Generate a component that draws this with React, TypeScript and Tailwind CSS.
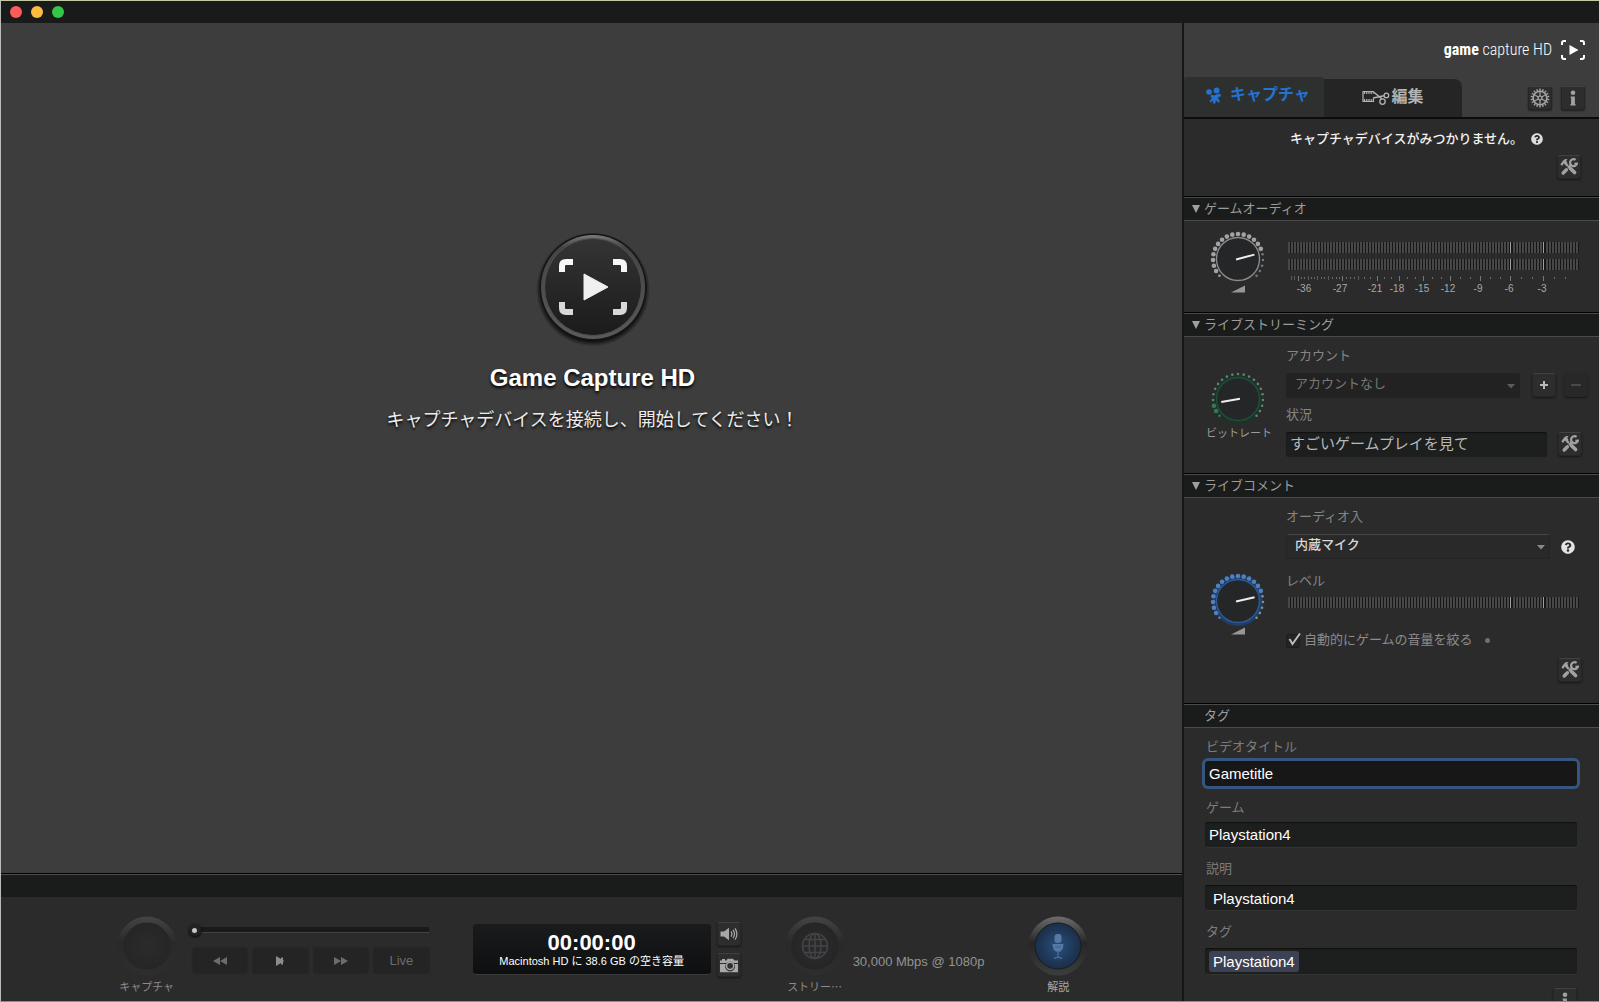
import { useState } from "react";
import type { ReactNode } from "react";
import { clsx } from "clsx";
import { FaQuestionCircle } from "react-icons/fa";

function ToolsIcon() {
	return (
		<svg viewBox="0 0 18 18" className="h-[18px] w-[18px]" fill="none">
			<path
				d="M0.400 6.200 3.200 2.400Q5 .6 7.600 1.200L6.200 2.800 7.400 4.800 5.400 6.800 3.800 5.600 2 8Z"
				fill="#a2a2a2"
			/>
			<path d="M5.600 5.600 7.800 7.800" stroke="#a2a2a2" strokeWidth="2.400" />
			<path
				d="m10.400 10.400 4.200 4.200"
				stroke="#a2a2a2"
				strokeWidth="3.600"
				strokeLinecap="round"
			/>
			<path
				d="m3.200 15 3.200-3.200"
				stroke="#a2a2a2"
				strokeWidth="3.400"
				strokeLinecap="round"
			/>
			<path d="m8 9.800 3.200-3.200" stroke="#a2a2a2" strokeWidth="2.400" />
			<path
				d="M15.600 1.800A3.500 3.500 0 1 0 17 5.600L14.400 5.800"
				stroke="#a2a2a2"
				strokeWidth="2.200"
			/>
		</svg>
	);
}

function GearIcon() {
	const teeth = Array.from({ length: 18 }, (_, i) => i * 20);
	return (
		<svg viewBox="-10 -10 20 20" className="h-5 w-5" stroke="#a2a2a2" fill="none">
			{teeth.map((deg) => (
				<path key={deg} d="M0-7V-9.4" strokeWidth="1.4" transform={`rotate(${deg})`} />
			))}
			<circle r="6.8" strokeWidth="1.6" />
			<circle r="1.9" strokeWidth="1.4" />
			{[0, 60, 120, 180, 240, 300].map((deg) => (
				<path key={deg} d="M0-2V-6.5" strokeWidth="1.3" transform={`rotate(${deg})`} />
			))}
		</svg>
	);
}

function InfoIcon() {
	return (
		<svg viewBox="0 0 8 16" className="h-4 w-2" fill="#a2a2a2">
			<circle cx="4" cy="2.800" r="2.300" />
			<path d="M1.600 6.400h4.300v7.800h.8v1.300H1.300v-1.300h.8V7.700h-.5z" />
		</svg>
	);
}

function PlayersIcon() {
	return (
		<svg viewBox="0 0 16 17" className="h-[17px] w-4" fill="#2373cf">
			<circle cx="3" cy="5" r="2.800" />
			<circle cx="10.600" cy="3.400" r="2.900" />
			<path d="M5.400 7.600 8 8.400 13 6.600 15.200 8 14.400 9.800 12.400 9.800 12.200 11.400 14 14.400 12.400 15.800 10 13.200 9.200 16.600 7 16.600 6.800 13.200 4.800 15.400 3.400 14.200 6 11 4.400 9.400Z" />
		</svg>
	);
}

function EditIcon() {
	return (
		<svg viewBox="0 0 28 17" className="h-[17px] w-7" fill="none" stroke="#b4b4b4">
			<path d="M11.500 2.500H1V12.500H11.500V9.500" strokeWidth="1.2" />
			<path d="M2 4H11.500M2 11H11.500" strokeWidth="1.8" strokeDasharray="1.2 1" />
			<path d="M11 2.500 20 10M11 9 22 6.800" strokeWidth="1.5" />
			<circle cx="24.400" cy="6.400" r="2.300" strokeWidth="1.3" />
			<circle cx="20.500" cy="12.600" r="2.700" strokeWidth="1.3" />
		</svg>
	);
}

function SpeakerIcon() {
	return (
		<svg viewBox="0 0 18 14" className="h-3.5 w-[18px]" fill="none" stroke="#a8a8a8">
			<path d="M.5 4.5H4L9 .8V13.2L4 9.5H.5Z" fill="#a8a8a8" stroke="none" />
			<path d="M11 4.4Q12.8 7 11 9.6M13 2.8Q16 7 13 11.2M15 1.4Q18.8 7 15 12.6" strokeWidth="1.2" />
		</svg>
	);
}

function CameraIcon() {
	return (
		<svg viewBox="0 0 20 15" className="h-[15px] w-5" fill="#a8a8a8">
			<path d="M1 5V2.5H3V1H6V2.5H7.5L8.5.8H14L15.4 2.5H19V5H14.6A4.8 4.8 0 0 0 7.6 5Z" />
			<path d="M1 6H7A4.8 4.8 0 1 0 15.2 6H19V14.2H1Z" />
			<circle cx="11.1" cy="7.8" r="3.6" fill="none" stroke="#a8a8a8" strokeWidth="1.5" />
		</svg>
	);
}

function IconButton({
	label,
	children,
	disabled,
}: {
	label: string;
	children: ReactNode;
	disabled?: boolean;
}) {
	return (
		<button
			type="button"
			aria-label={label}
			disabled={disabled}
			className={clsx(
				"flex h-6 w-6 shrink-0 items-center justify-center rounded-[3px] shadow-[0_1px_2px_#00000080]",
				disabled
					? "bg-[#282828]"
					: "border border-[#262626] border-t-[#424242] bg-[#2d2d2d]",
			)}
		>
			{children}
		</button>
	);
}

const tones = {
	gray: { ring: "#8a8a8a", lit: "#a3a3a3", dim: "#757575", glow: "none" },
	green: { ring: "#1e5038", lit: "#2f7b55", dim: "#6d7d74", glow: "#1c3428" },
	blue: { ring: "#2a5c9c", lit: "#5180c0", dim: "#8d8f85", glow: "#1f3f68" },
};

function Knob({
	tone,
	label,
	lit,
	angle,
	wedge,
}: {
	tone: keyof typeof tones;
	label: string;
	lit: number;
	angle: number;
	wedge?: boolean;
}) {
	const { ring, lit: litColor, dim, glow } = tones[tone];
	const dots = Array.from({ length: 21 }, (_, i) => {
		const a = ((-132 + i * 13.2) * Math.PI) / 180;
		return { x: 25 * Math.sin(a), y: -25 * Math.cos(a), on: i < lit };
	});
	return (
		<div className="relative w-14">
			<svg
				viewBox={wedge ? "-28 -28 56 62" : "-28 -28 56 56"}
				className={wedge ? "block h-[62px] w-14" : "block h-14 w-14"}
			>
				<circle r="23.5" fill="none" stroke={glow} strokeWidth="3" />
				{dots.map((dot, i) => (
					<circle
						key={i}
						cx={dot.x}
						cy={dot.y}
						r={dot.on && i > 0 ? 2.3 : 1.3}
						fill={dot.on ? litColor : dim}
					/>
				))}
				<circle r="21.5" fill="#252627" stroke={ring} strokeWidth="1.4" />
				<path
					d="M-2 0H17"
					stroke="#eeeeee"
					strokeWidth="2"
					transform={`rotate(${angle})`}
				/>
				{wedge && <path d="M-7 33.5 7 26.500V33.5Z" fill="#969696" />}
			</svg>
			<input
				type="range"
				aria-label={label}
				className="absolute inset-0 h-full w-full opacity-0"
			/>
		</div>
	);
}

function Meter({ label }: { label: string }) {
	const bars = Array.from({ length: 97 }, (_, i) => i);
	return (
		<svg role="img" aria-label={label} viewBox="0 0 291 11" className="block h-[11px] w-[291px]">
			<rect width="291" height="11" fill="#161616" />
			{bars.map((i) => (
				<rect
					key={i}
					x={i * 3}
					width={i === 74 || i === 85 ? 1 : 2}
					height="11"
					fill={i === 74 || i === 85 ? "#a0a0a0" : "#484848"}
				/>
			))}
		</svg>
	);
}

const scale = [
	{ db: -36, tick: 10, x: 16 },
	{ db: -27, tick: 54, x: 52 },
	{ db: -21, tick: 89, x: 87 },
	{ db: -18, tick: 111, x: 109 },
	{ db: -15, tick: 135, x: 134 },
	{ db: -12, tick: 162, x: 160 },
	{ db: -9, tick: 192, x: 190 },
	{ db: -6, tick: 222, x: 221 },
	{ db: -3, tick: 255, x: 254 },
];
const mediumTicks = [3, 6, 20, 29, 40, 70];
const smallTicks = [
	13, 16, 23, 26, 33, 36, 44, 48, 51, 58, 62, 66, 76, 82, 96, 103, 119, 127, 144,
	153, 172, 182, 202, 212, 233, 244, 266, 277,
];

function MeterScale() {
	return (
		<svg viewBox="0 0 291 20" className="block h-5 w-[291px]">
			{smallTicks.map((x) => (
				<rect key={x} x={x} y="1" width="1" height="2" fill="#6a6a6a" />
			))}
			{mediumTicks.map((x) => (
				<rect key={x} x={x} y="0" width="1" height="4" fill="#5c5c5c" />
			))}
			{scale.map(({ db, tick, x }) => (
				<g key={db}>
					<rect x={tick} width="1" height="5" fill="#777777" />
					<text x={x} y="16" textAnchor="middle" fontSize="10" fill="#a8a8a8">
						{db}
					</text>
				</g>
			))}
		</svg>
	);
}

function SectionHeader({ title, plain }: { title: string; plain?: boolean }) {
	return (
		<h2 className="flex h-[25px] shrink-0 items-center border-t border-b border-t-black border-b-[#4a4a4a] bg-[#1a1b1b] pl-2 text-[13px] text-[#9c9c9c] shadow-[inset_0_1px_0_#4a4a4a]">
			{plain ? (
				<span className="pl-3">{title}</span>
			) : (
				<button type="button" className="flex items-center gap-1">
					<svg viewBox="0 0 8 8" className="h-2 w-2" fill="#a0a0a0">
						<path d="M0 0H8L4 8Z" />
					</svg>
					{title}
				</button>
			)}
		</h2>
	);
}

function Caret({ className }: { className: string }) {
	return (
		<svg viewBox="0 0 8 5" className={clsx("absolute top-[11px] h-[5px] w-2", className)}>
			<path d="M0 0H8L4 4.500Z" fill="currentColor" />
		</svg>
	);
}

function Field({
	id,
	label,
	value,
	inputClass,
	gap,
}: {
	id: string;
	label: string;
	value: string;
	inputClass: string;
	gap: string;
}) {
	const [text, setText] = useState(value);
	return (
		<div className={clsx("flex flex-col", gap)}>
			<label htmlFor={id} className="pl-px text-[13px] leading-4 text-[#7c7c7c]">
				{label}
			</label>
			<input
				id={id}
				value={text}
				onChange={(e) => setText(e.target.value)}
				className={clsx(
					"h-[25px] w-full rounded-[3px] text-[15px] text-white outline-none",
					inputClass,
				)}
			/>
		</div>
	);
}

const boxClass =
	"bg-[#1d1e1e] shadow-[inset_0_1px_1px_#0f0f0f,0_1px_0_#343434]";

function RoundButton({
	id,
	label,
	active,
	children,
}: {
	id: string;
	label: string;
	active?: boolean;
	children?: ReactNode;
}) {
	return (
		<div className="flex w-[60px] flex-col items-center gap-[3px]">
			<button type="button" aria-labelledby={`${id}-label`}>
				<svg viewBox="-30 -30 60 60" className="h-[60px] w-[60px]">
					<defs>
						<linearGradient id={`${id}-rim`} x2="0" y2="1">
							<stop stopColor={active ? "#6c6c6c" : "#444444"} />
							<stop offset=".45" stopColor={active ? "#262626" : "#292929"} />
							<stop offset="1" stopColor={active ? "#3c3d3d" : "#2e2e2e"} />
						</linearGradient>
						<radialGradient id={`${id}-face`}>
							<stop stopColor={active ? "#294f7c" : "#2b2b2b"} />
							<stop offset="1" stopColor={active ? "#1b2f49" : "#262626"} />
						</radialGradient>
					</defs>
					<circle r="29.500" fill={`url(#${id}-rim)`} />
					<circle r="23.500" fill={active ? "#1a1d21" : "#252525"} />
					<circle r="22.500" fill={`url(#${id}-face)`} />
					{children}
				</svg>
			</button>
			<span
				id={`${id}-label`}
				className={clsx(
					"text-[11px] leading-4 whitespace-nowrap",
					active ? "text-[#a6a6a6]" : "text-[#8b8b8b]",
				)}
			>
				{label}
			</span>
		</div>
	);
}

function TransportButton({ label, children }: { label: string; children: ReactNode }) {
	return (
		<button
			type="button"
			aria-label={label}
			className="flex h-[25px] flex-1 items-center justify-center rounded-[3px] bg-[#242424] text-[13px] text-[#6c6c6c] shadow-[0_0_2px_#1c1c1c]"
		>
			{children}
		</button>
	);
}

function ControlBar() {
	return (
		<footer className="flex h-[104px] shrink-0 items-start justify-center gap-11 bg-[#2b2b2b] pt-[19px] pl-[22px]">
			<div className="flex gap-3">
				<RoundButton id="capture" label="キャプチャ" />
				<div className="flex w-[240px] flex-col pt-2">
					<div className="relative flex h-[12px] items-center pl-3">
						<div className="h-[6px] w-full border-b border-[#424242] bg-[#1a1a1a]" />
						<span className="absolute top-0 left-0 flex h-3 w-3 items-center justify-center rounded-full bg-[#222222] shadow-[0_1px_3px_#000000]">
							<span className="h-[5px] w-[5px] rounded-full bg-[#c4c4c4]" />
						</span>
						<input
							type="range"
							aria-label="再生位置"
							defaultValue={0}
							className="absolute inset-0 w-full opacity-0"
						/>
					</div>
					<div className="mt-3 flex gap-[6px] pl-1">
						<TransportButton label="巻き戻し">
							<svg viewBox="0 0 14 8" className="h-2 w-3.5" fill="currentColor">
								<path d="M7 0V8L0 4ZM14 0V8L7 4Z" />
							</svg>
						</TransportButton>
						<TransportButton label="再生">
							<svg viewBox="0 0 8 10" className="h-2.5 w-2" fill="#8c8c8c">
								<path d="M0 0 5 3V1.500H7V4L8 5 7 6V8.500H5V7L0 10Z" />
							</svg>
						</TransportButton>
						<TransportButton label="早送り">
							<svg viewBox="0 0 14 8" className="h-2 w-3.5" fill="currentColor">
								<path d="M0 0V8L7 4ZM7 0V8L14 4Z" />
							</svg>
						</TransportButton>
						<TransportButton label="Live">Live</TransportButton>
					</div>
				</div>
			</div>
			<div className="flex items-start gap-[6px] pt-[6px]">
				<div className="mt-[2px] flex h-[50px] w-[238px] flex-col items-center justify-center rounded-[3px] bg-linear-to-b from-[#1a1b1c] to-[#0e0f10] text-white shadow-[0_1px_0_#3a3a3a]">
					<time className="pt-1 text-[22px] leading-5 font-bold">00:00:00</time>
					<p className="text-[11px] leading-4 whitespace-nowrap">
						Macintosh HD に 38.6 GB の空き容量
					</p>
				</div>
				<div className="flex flex-col gap-[7px]">
					<IconButton label="音量">
						<SpeakerIcon />
					</IconButton>
					<IconButton label="スナップショット">
						<CameraIcon />
					</IconButton>
				</div>
			</div>
			<div className="flex gap-2">
				<RoundButton id="stream" label="ストリー⋯">
					<g fill="none" stroke="#424447" strokeWidth="1.500">
						<circle r="12.500" />
						<ellipse rx="6" ry="12.500" />
						<path d="M0-12.500V12.500M-12.500 0H12.500M-10.500-6.500H10.500M-10.500 6.500H10.500" />
					</g>
				</RoundButton>
				<p className="pt-9 text-[13px] leading-5 whitespace-nowrap text-[#939393]">
					30,000 Mbps @ 1080p
				</p>
			</div>
			<RoundButton id="commentary" label="解説" active>
				<rect x="-3.500" y="-12" width="7" height="9" rx="3" fill="#5678a4" />
				<path d="M-5.500-2H5.500Q5 6 0 6T-5.500-2Z" fill="#5678a4" />
				<path d="M-3 1H3M0 5V11M-4 12.500 0 11 4 12.500" fill="none" stroke="#466a98" strokeWidth="1.500" />
			</RoundButton>
		</footer>
	);
}

function Stage() {
	return (
		<section className="flex flex-1 flex-col items-center bg-[#3d3d3d] pt-[204px] pl-[2px]">
			<svg viewBox="-60 -60 120 120" className="h-[120px] w-[120px]">
				<defs>
					<linearGradient id="disc-rim" x2="0" y2="1">
						<stop stopColor="#7a7a7a" />
						<stop offset=".12" stopColor="#444444" />
						<stop offset="1" stopColor="#5a5a5a" />
					</linearGradient>
					<linearGradient id="disc-face" x2="0" y2="1">
						<stop stopColor="#343434" />
						<stop offset="1" stopColor="#1b1b1b" />
					</linearGradient>
					<radialGradient id="disc-shadow">
						<stop offset=".88" stopColor="#000000" stopOpacity=".9" />
						<stop offset="1" stopColor="#000000" stopOpacity="0" />
					</radialGradient>
				</defs>
				<circle cy="2.500" r="57" fill="url(#disc-shadow)" />
				<circle r="53.500" fill="#151515" />
				<circle r="52" fill="url(#disc-rim)" />
				<circle r="48.500" fill="url(#disc-face)" stroke="#505050" />
				<g fill="none" strokeWidth="6">
					<path d="M-31-15V-21Q-31-25-27-25H-20M20-25H27Q31-25 31-21V-15" stroke="#f6f6f6" />
					<path d="M-31 15V21Q-31 25-27 25H-20M20 25H27Q31 25 31 21V15" stroke="#d8d8d8" />
				</g>
				<path d="M-9-13 15 0-9 13Z" fill="#f0f0f0" stroke="#f0f0f0" strokeLinejoin="round" />
			</svg>
			<h1 className="mt-[15px] text-2xl font-bold text-white [text-shadow:0_2px_3px_#000000]">
				Game Capture HD
			</h1>
			<p className="mt-3 text-lg text-[#ececec] [text-shadow:0_2px_3px_#000000]">
				キャプチャデバイスを接続し、開始してください！
			</p>
		</section>
	);
}

function Sidebar() {
	return (
		<aside className="flex w-[417px] shrink-0 flex-col overflow-hidden border-l-2 border-[#161616] bg-[#2b2b2b]">
			<header className="flex h-[94px] shrink-0 flex-col justify-between bg-[#3d3d3d]">
				<div className="flex items-center justify-end gap-2 pt-[15px] pr-[13px] text-white">
					<p className="font-['Liberation_Sans_Narrow','Roboto_Condensed','Liberation_Sans',sans-serif] text-base leading-6 font-light">
						<b className="font-bold">game</b> capture HD
					</p>
					<svg viewBox="0 0 26 22" className="h-[22px] w-[26px]" fill="none" stroke="#ffffff" strokeWidth="2">
						<path d="M2 6V4Q2 2 4 2H6M20 2H22Q24 2 24 4V6M2 16V18Q2 20 4 20H6M20 20H22Q24 20 24 18V16" />
						<path d="M9.500 6V16L18.500 11Z" fill="#ffffff" stroke="none" />
					</svg>
				</div>
				<nav className="flex items-end">
					<button
						type="button"
						className="flex h-10 w-[140px] items-center justify-center gap-2 rounded-t-[3px] bg-[#2e302f] pb-1 pl-2 text-base font-bold text-[#2373cf]"
					>
						<PlayersIcon />
						キャプチャ
					</button>
					<button
						type="button"
						className="flex h-[38px] w-[138px] items-center justify-center gap-px rounded-tr-lg bg-[#252525] pb-[2px] text-base font-bold text-[#b4b4b4]"
					>
						<EditIcon />
						編集
					</button>
					<div className="mb-[7px] ml-auto flex gap-[9px] pr-[14px]">
						<IconButton label="環境設定">
							<GearIcon />
						</IconButton>
						<IconButton label="情報">
							<InfoIcon />
						</IconButton>
					</div>
				</nav>
			</header>

			<div className="h-[79px] shrink-0 border-t-2 border-[#0c0c0c]">
				<div className="flex items-center justify-end gap-2 pt-3 pr-14">
					<p className="text-[13px] leading-4 font-medium text-[#f2f2f2]">
						キャプチャデバイスがみつかりません。
					</p>
					<FaQuestionCircle className="h-3 w-3 text-[#dddddd]" />
				</div>
				<div className="mt-2 flex justify-end pr-[18px]">
					<IconButton label="デバイス設定">
						<ToolsIcon />
					</IconButton>
				</div>
			</div>

			<SectionHeader title="ゲームオーディオ" />
			<div className="flex h-[91px] shrink-0 gap-[22px] pt-[10px] pl-[26px]">
				<Knob tone="gray" label="ゲーム音量" lit={16} angle={-15} wedge />
				<div className="pt-[11px]">
					<div className="flex flex-col gap-[6px]">
						<Meter label="左チャンネル" />
						<Meter label="右チャンネル" />
						<MeterScale />
					</div>
				</div>
			</div>

			<SectionHeader title="ライブストリーミング" />
			<div className="flex h-[136px] shrink-0 gap-5 pl-[26px]">
				<div className="w-14 pt-[34px]">
					<Knob tone="green" label="ビットレート" lit={3} angle={170} />
					<p className="-ml-1 text-[11px] leading-3 whitespace-nowrap text-[#9c9c9c]">
						ビットレート
					</p>
				</div>
				<div className="flex flex-col gap-[9px] pt-[11px]">
					<label htmlFor="account" className="text-[13px] leading-4 text-[#858585]">
						アカウント
					</label>
					<div className="flex gap-2">
						<div className="relative mr-1">
							<select
								id="account"
								disabled
								className="block h-[25px] w-[234px] appearance-none rounded-[3px] bg-[#222222] pb-[3px] pl-[9px] text-[13px] text-[#777777] opacity-100"
							>
								<option>アカウントなし</option>
							</select>
							<Caret className="right-[5px] text-[#5c5c5c]" />
						</div>
						<IconButton label="追加">
							<svg viewBox="0 0 8 8" className="h-2 w-2">
								<path d="M4 0V8M0 4H8" stroke="#b8b8b8" strokeWidth="2" />
							</svg>
						</IconButton>
						<IconButton label="削除" disabled>
							<svg viewBox="0 0 10 8" className="h-2 w-2.5">
								<path d="M0 4H10" stroke="#6a6a6a" />
							</svg>
						</IconButton>
					</div>
					<label htmlFor="status" className="text-[13px] leading-4 text-[#858585]">
						状況
					</label>
					<div className="flex gap-[11px]">
						<input
							id="status"
							defaultValue="すごいゲームプレイを見て"
							className="h-[25px] w-[261px] rounded-[3px] bg-[#1d1e1e] pb-1 pl-1 text-[15px] text-[#b8b8b8] shadow-[inset_0_1px_1px_#0f0f0f] outline-none"
						/>
						<IconButton label="配信設定">
							<ToolsIcon />
						</IconButton>
					</div>
				</div>
			</div>

			<SectionHeader title="ライブコメント" />
			<div className="flex h-[205px] shrink-0 gap-5 pl-[26px]">
				<div className="pt-[75px]">
					<Knob tone="blue" label="マイク音量" lit={16} angle={-13} wedge />
				</div>
				<div className="flex w-[296px] flex-col pt-[11px]">
					<label htmlFor="audio-in" className="text-[13px] leading-4 text-[#858585]">
						オーディオ入
					</label>
					<div className="mt-[9px] flex items-center gap-[11px]">
						<div className="relative">
							<select
								id="audio-in"
								className="block h-[25px] w-[264px] appearance-none rounded-[3px] border border-[#242424] border-t-[#464646] bg-[#292929] pb-[3px] pl-2 text-[13px] font-medium text-[#d8d8d8] outline-none"
							>
								<option>内蔵マイク</option>
							</select>
							<Caret className="right-[5px] text-[#8a8a8a]" />
						</div>
						<FaQuestionCircle className="h-3.5 w-3.5 text-[#e4e4e4]" />
					</div>
					<p className="mt-3.5 text-[13px] leading-4 text-[#858585]">レベル</p>
					<div className="mt-2 pl-[2px]">
						<Meter label="レベル" />
					</div>
					<div className="mt-6 flex items-center gap-3">
						<label className="flex items-center gap-[3px] text-[13px] leading-4 text-[#8c8c8c]">
							<input type="checkbox" defaultChecked className="peer sr-only" />
							<svg viewBox="0 0 15 15" className="h-[15px] w-[15px]" fill="none">
								<rect x=".5" y="1.500" width="13" height="13" rx="2" fill="#242424" stroke="#1c1c1c" />
								<path d="M3.500 6 6.500 11 14 .5" stroke="#bcbcbc" strokeWidth="2" />
							</svg>
							自動的にゲームの音量を絞る
						</label>
						<span className="h-[5px] w-[5px] rounded-full bg-[#6f6f6f]" />
					</div>
					<div className="mt-[10px] flex justify-end">
						<IconButton label="コメント設定">
							<ToolsIcon />
						</IconButton>
					</div>
				</div>
			</div>

			<SectionHeader title="タグ" plain />
			<form className="flex flex-col gap-3.5 pt-[11px] pr-[22px] pl-[21px]">
				<Field
					id="video-title"
					label="ビデオタイトル"
					value="Gametitle"
					gap="gap-[6px]"
					inputClass="bg-[#171717] pl-1 pb-px ring-[3px] ring-[#35567f]"
				/>
				<Field
					id="game"
					label="ゲーム"
					value="Playstation4"
					gap="gap-[6px]"
					inputClass={clsx(boxClass, "pl-1 pb-px")}
				/>
				<Field
					id="description"
					label="説明"
					value="Playstation4"
					gap="gap-2"
					inputClass={clsx(boxClass, "pl-2 pt-[2px]")}
				/>
				<div className="flex flex-col gap-2">
					<label htmlFor="tags" className="pl-px text-[13px] leading-4 text-[#7c7c7c]">
						タグ
					</label>
					<div className={clsx(boxClass, "flex h-[26px] items-center rounded-[3px] pl-1")}>
						<span className="rounded-[3px] bg-[#3c4254] px-1 text-[15px] leading-[21px] text-white">
							Playstation4
						</span>
						<input id="tags" className="min-w-0 flex-1 bg-transparent outline-none" />
					</div>
				</div>
				<div className="flex justify-end">
					<IconButton label="タグ情報">
						<InfoIcon />
					</IconButton>
				</div>
			</form>
		</aside>
	);
}

export default function App() {
	return (
		<div className="flex h-screen flex-col overflow-hidden border-t border-b border-l border-t-[#c3caa2] border-b-[#8f898c] border-l-[#b9bcbb] bg-[#191a1a] font-['Liberation_Sans','Noto_Sans_CJK_JP',sans-serif]">
			<div className="flex h-[22px] shrink-0 items-center gap-[9px] pl-[9px]">
				<button type="button" aria-label="閉じる" className="h-3 w-3 rounded-full bg-[#fc5b57]" />
				<button type="button" aria-label="しまう" className="h-3 w-3 rounded-full bg-[#fdbc40]" />
				<button type="button" aria-label="拡大" className="h-3 w-3 rounded-full bg-[#33c748]" />
			</div>
			<div className="flex min-h-0 flex-1">
				<main className="flex min-w-0 flex-1 flex-col">
					<Stage />
					<div className="h-6 shrink-0 border-t border-black bg-[#1a1c1b] shadow-[inset_0_1px_0_#4c4c4c]" />
					<ControlBar />
				</main>
				<Sidebar />
			</div>
		</div>
	);
}
